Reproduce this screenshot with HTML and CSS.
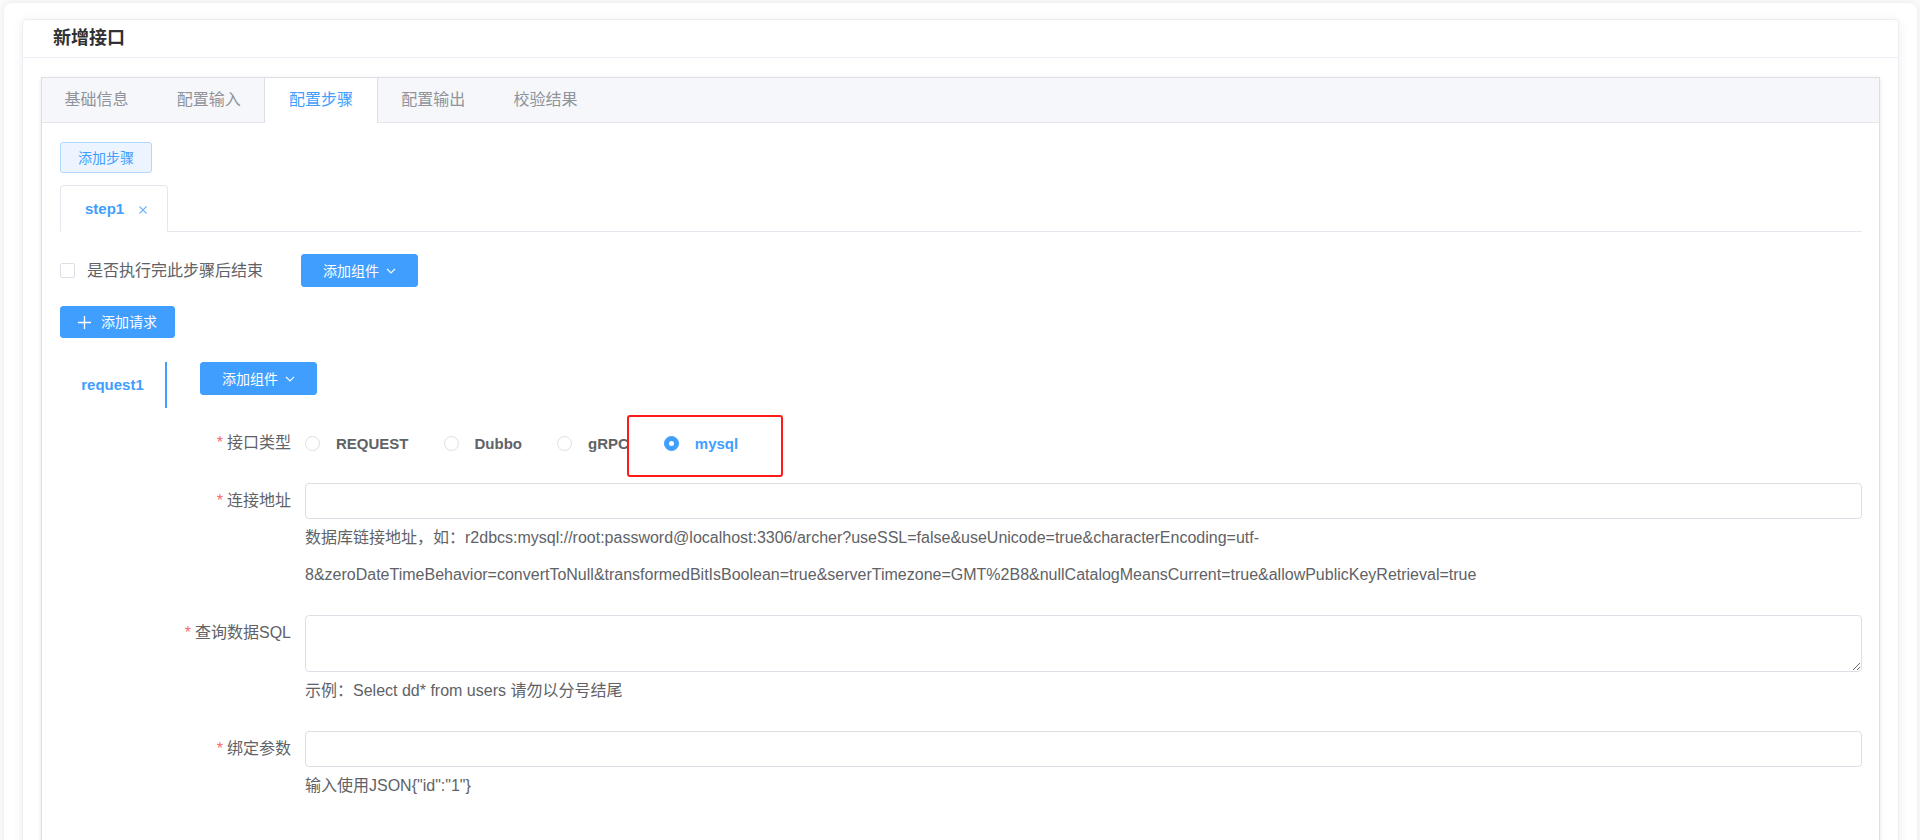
FILE: index.html
```html
<!DOCTYPE html>
<html lang="zh-CN">
<head>
<meta charset="utf-8">
<title>新增接口</title>
<link rel="stylesheet" href="styles.css">
</head>
<body>
<div class="page">
  <div class="card">
    <div class="card-header">新增接口</div>
    <div class="card-body">
      <div class="tabs-card">
        <div class="tabs-nav">
          <div class="tab">基础信息</div>
          <div class="tab">配置输入</div>
          <div class="tab active">配置步骤</div>
          <div class="tab">配置输出</div>
          <div class="tab">校验结果</div>
        </div>
        <div class="tabs-content">
          <div class="btn-row">
            <button class="btn btn-plain">添加步骤</button>
          </div>
          <div class="step-nav">
            <div class="step-tab">step1<svg class="close" width="8" height="8" viewBox="0 0 8 8"><path d="M0.5 0.5l7 7M7.5 0.5l-7 7" stroke="#6fb3fb" stroke-width="1.1" fill="none"/></svg></div>
          </div>
          <div class="step-row">
            <label class="checkbox"><span class="box"></span>是否执行完此步骤后结束</label>
            <button class="btn btn-primary btn-dropdown">添加组件<svg width="10" height="6" viewBox="0 0 10 6"><path d="M1 0.8l4 4 4-4" fill="none" stroke="#fff" stroke-width="1.2"/></svg></button>
          </div>
          <div class="add-row">
            <button class="btn btn-primary btn-add"><svg width="13" height="13" viewBox="0 0 13 13"><path d="M6.5 0v13M0 6.5h13" stroke="#fff" stroke-width="1.4" fill="none"/></svg>添加请求</button>
          </div>
          <div class="req">
            <div class="req-nav">
              <div class="req-tab">request1</div>
            </div>
            <div class="req-pane">
              <div class="pane-top">
                <button class="btn btn-primary btn-dropdown">添加组件<svg width="10" height="6" viewBox="0 0 10 6"><path d="M1 0.8l4 4 4-4" fill="none" stroke="#fff" stroke-width="1.2"/></svg></button>
              </div>
              <div class="form">
                <div class="form-item">
                  <div class="form-label"><span class="star">*</span>接口类型</div>
                  <div class="form-content">
                    <div class="radio-group">
                      <span class="radio"><span class="radio-circle"></span>REQUEST</span>
                      <span class="radio"><span class="radio-circle"></span>Dubbo</span>
                      <span class="radio"><span class="radio-circle"></span>gRPC</span>
                      <span class="radio checked highlight"><span class="radio-circle"></span>mysql</span>
                    </div>
                  </div>
                </div>
                <div class="form-item">
                  <div class="form-label"><span class="star">*</span>连接地址</div>
                  <div class="form-content">
                    <input class="input" type="text">
                    <div class="hint">数据库链接地址，如：r2dbcs:mysql://root:password@localhost:3306/archer?useSSL=false&amp;useUnicode=true&amp;characterEncoding=utf-<br>8&amp;zeroDateTimeBehavior=convertToNull&amp;transformedBitIsBoolean=true&amp;serverTimezone=GMT%2B8&amp;nullCatalogMeansCurrent=true&amp;allowPublicKeyRetrieval=true</div>
                  </div>
                </div>
                <div class="form-item">
                  <div class="form-label"><span class="star">*</span>查询数据SQL</div>
                  <div class="form-content">
                    <textarea class="textarea"></textarea>
                    <div class="hint">示例：Select dd* from users 请勿以分号结尾</div>
                  </div>
                </div>
                <div class="form-item">
                  <div class="form-label"><span class="star">*</span>绑定参数</div>
                  <div class="form-content">
                    <input class="input" type="text">
                    <div class="hint">输入使用JSON{"id":"1"}</div>
                  </div>
                </div>
              </div>
            </div>
          </div>
        </div>
      </div>
    </div>
  </div>
</div>
</body>
</html>
```

FILE: styles.css
```css
* { box-sizing: border-box; }
html, body { margin: 0; height: 100%; overflow: hidden; }
body {
  font-family: "Liberation Sans", "Noto Sans CJK SC", sans-serif;
  background: #fafafa;
  color: #606266;
}
.page {
  margin: 3px 3px 0 4px;
  padding: 16px 18px 40px;
  background: #fff;
  border-radius: 8px;
  box-shadow: 0 0 6px rgba(0, 0, 0, 0.08);
  min-height: 1000px;
}
.card {
  background: #fff;
  border: 1px solid #ebeef5;
  border-radius: 4px;
  box-shadow: 0 2px 12px rgba(0, 0, 0, 0.07);
}
.card-header {
  height: 38px;
  line-height: 37px;
  padding: 0 30px;
  border-bottom: 1px solid #ebeef5;
  font-size: 18px;
  font-weight: bold;
  color: #303133;
}
.card-body { padding: 19px 18px 0; }
.tabs-card {
  border: 1px solid #dcdfe6;
  background: #fff;
  box-shadow: 0 2px 4px rgba(0, 0, 0, 0.08), 0 0 6px rgba(0, 0, 0, 0.03);
}
.tabs-nav {
  display: flex;
  height: 45px;
  background: #f5f7fa;
  border-bottom: 1px solid #e4e7ed;
}
.tab {
  height: 45px;
  line-height: 44px;
  padding: 0 23.6px;
  font-size: 16px;
  color: #909399;
  border-left: 1px solid transparent;
  border-right: 1px solid transparent;
  margin-left: -1px;
  margin-bottom: -1px;
}
.tab:first-child { margin-left: -2px; }
.tab.active {
  background: #fff;
  color: #409eff;
  border-left-color: #dcdfe6;
  border-right-color: #dcdfe6;
}
.tabs-content { padding: 19px 17px 200px 18px; }
.btn-row, .add-row, .pane-top { display: flex; }
.btn {
  display: inline-flex;
  align-items: center;
  justify-content: center;
  font-family: inherit;
  font-size: 14px;
  line-height: 1;
  border-radius: 3px;
  border: 1px solid;
  padding: 0;
  cursor: pointer;
}
.btn-plain {
  height: 31px;
  padding: 0 17px;
  background: #ecf5ff;
  border-color: #b3d8ff;
  color: #409eff;
}
.btn-primary {
  background: #409eff;
  border-color: #409eff;
  color: #fff;
}
.btn-dropdown {
  height: 33px;
  padding: 0 21px;
  gap: 7px;
}
.btn-add {
  height: 32px;
  padding: 0 17px;
  gap: 10px;
}
.step-nav {
  margin-top: 12px;
  display: flex;
  border-bottom: 1px solid #e4e7ed;
}
.step-tab {
  height: 47px;
  margin-bottom: -1px;
  border: 1px solid #e4e7ed;
  border-bottom-color: #fff;
  border-radius: 4px 4px 0 0;
  display: flex;
  align-items: center;
  padding: 0 20px 0 24px;
  font-size: 15px;
  font-weight: bold;
  color: #409eff;
}
.close { margin-left: 15px; margin-top: 2px; }
.step-row {
  display: flex;
  align-items: center;
  height: 33px;
  margin-top: 22px;
}
.checkbox {
  display: flex;
  align-items: center;
  font-size: 16px;
  line-height: 20px;
  color: #606266;
  margin-right: 38px;
}
.box {
  width: 15px;
  height: 15px;
  border: 1px solid #dcdfe6;
  border-radius: 2px;
  background: #fff;
  margin-right: 12px;
}
.add-row { margin-top: 19px; }
.req { display: flex; margin-top: 24px; }
.req-nav { width: 107px; flex: none; }
.req-tab {
  height: 46px;
  line-height: 46px;
  text-align: center;
  border-right: 2px solid #409eff;
  font-size: 15px;
  font-weight: bold;
  color: #409eff;
}
.req-pane { flex: 1; min-width: 0; padding-left: 18px; }
.pane-top { padding-left: 15px; }
.form { margin-top: 30px; }
.form-item { display: flex; margin-bottom: 22px; }
.form-label {
  width: 120px;
  flex: none;
  display: flex;
  justify-content: flex-end;
  white-space: nowrap;
  padding-right: 14px;
  font-size: 16px;
  line-height: 36px;
  height: 36px;
  color: #606266;
}
.star { color: #f56c6c; margin-right: 4px; }
.form-content { flex: 1; min-width: 0; }
.radio-group { display: flex; align-items: center; height: 36px; }
.radio {
  display: inline-flex;
  align-items: center;
  height: 36px;
  margin-right: 35px;
  font-size: 15px;
  font-weight: bold;
  color: #606266;
  position: relative;
}
.radio-circle {
  width: 15px;
  height: 15px;
  border: 1px solid #dcdfe6;
  border-radius: 50%;
  background: #fff;
  margin-right: 16px;
  display: flex;
  align-items: center;
  justify-content: center;
}
.radio.checked { color: #409eff; }
.radio.checked .radio-circle { background: #409eff; border-color: #409eff; }
.radio.checked .radio-circle::after {
  content: "";
  width: 5px;
  height: 5px;
  border-radius: 50%;
  background: #fff;
}
.radio.highlight { z-index: 1; }
.radio.highlight::before {
  content: "";
  position: absolute;
  left: -37px;
  top: -10px;
  width: 152px;
  height: 58px;
  border: 2px solid #ff1a1a;
  border-radius: 3px;
  background: #fff;
  z-index: -1;
}
.input {
  display: block;
  width: 100%;
  height: 36px;
  border: 1px solid #dcdfe6;
  border-radius: 4px;
  outline: none;
  padding: 0 15px;
  font-family: inherit;
  font-size: 14px;
  background: #fff;
}
.textarea {
  display: block;
  width: 100%;
  height: 57px;
  border: 1px solid #dcdfe6;
  border-radius: 4px;
  outline: none;
  padding: 5px 15px;
  font-family: inherit;
  font-size: 14px;
  resize: vertical;
  background: #fff;
}
.hint {
  font-size: 16px;
  line-height: 37px;
  color: #606266;
  white-space: nowrap;
}
```
